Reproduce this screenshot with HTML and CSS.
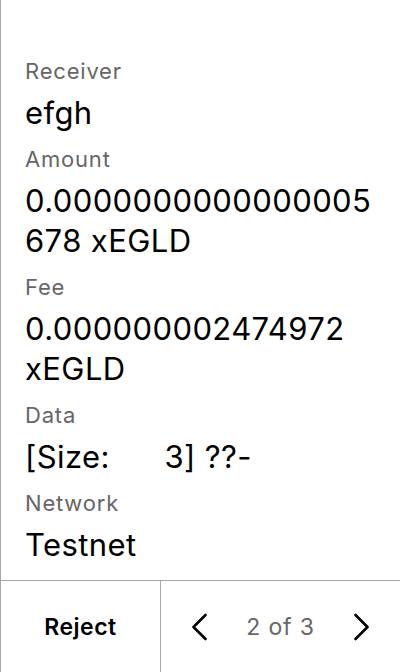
FILE: index.html
```html
<!DOCTYPE html>
<html>
<head>
<meta charset="utf-8">
<link rel="stylesheet" href="styles.css">
</head>
<body>
<div class="screen">
  <div class="details">
    <div class="label">Receiver</div>
    <div class="value">efgh</div>
    <div class="label">Amount</div>
    <div class="value">0.0000000000000005678 xEGLD</div>
    <div class="label">Fee</div>
    <div class="value">0.000000002474972 xEGLD</div>
    <div class="label">Data</div>
    <div class="value pre">[Size:      3] ??-</div>
    <div class="label">Network</div>
    <div class="value">Testnet</div>
  </div>
  <div class="footer">
    <div class="reject">Reject</div>
    <div class="pager">
      <svg class="chev" width="15" height="28" viewBox="0 0 15 28"><polyline points="13.5,2 1.5,14 13.5,26" fill="none" stroke="#000" stroke-width="2.6" stroke-linecap="round" stroke-linejoin="round"/></svg>
      <span class="count">2 of 3</span>
      <svg class="chev" width="15" height="28" viewBox="0 0 15 28"><polyline points="1.5,2 13.5,14 1.5,26" fill="none" stroke="#000" stroke-width="2.6" stroke-linecap="round" stroke-linejoin="round"/></svg>
    </div>
  </div>
</div>
</body>
</html>
```
FILE: styles.css
```css
html, body {
  margin: 0;
  padding: 0;
  background: #fff;
}
body {
  font-family: Inter, "Noto Sans", sans-serif;
  color: #000;
}
.screen {
  width: 399px;
  height: 672px;
  border-left: 1px solid #a8a8a8;
  display: flex;
  flex-direction: column;
}
.details {
  flex: 1;
  padding: 45px 24px 0 24px;
  display: flex;
  flex-direction: column;
}
.label {
  font-size: 22px;
  line-height: 24px;
  letter-spacing: 0.8px;
  color: #666;
  margin-top: 14px;
  margin-bottom: 10px;
}
.value {
  font-size: 31px;
  line-height: 40px;
  letter-spacing: 0.4px;
  overflow-wrap: anywhere;
}
.pre {
  white-space: pre;
}
.footer {
  height: 91px;
  border-top: 1px solid #a8a8a8;
  display: flex;
}
.reject {
  width: 159px;
  display: flex;
  align-items: center;
  justify-content: center;
  font-size: 23px;
  font-weight: 600;
  letter-spacing: 0.5px;
}
.pager {
  flex: 1;
  border-left: 1px solid #a8a8a8;
  display: flex;
  align-items: center;
  justify-content: space-between;
  padding: 0 31px 0 31px;
}
.count {
  font-size: 23px;
  letter-spacing: 0.8px;
  color: #666;
}
.chev {
  display: block;
}
```
